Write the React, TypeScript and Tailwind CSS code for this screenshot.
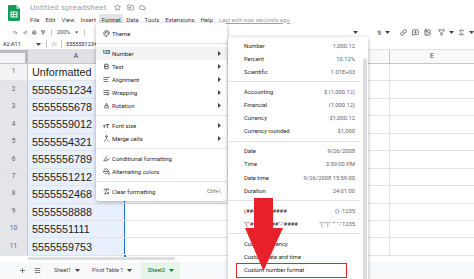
import React from 'react';
import {
  Undo2, Redo2, Printer, PaintRoller, Palette, Bold, AlignLeft, WrapText,
  Baseline, Merge, PaintBucket, RemoveFormatting, Star, FolderInput, Cloud,
  Link, MessageSquarePlus, Image, Filter, Sigma, Plus, Menu, Highlighter
} from 'lucide-react';

const rows = [
  'Unformatted',
  '5555551234', '5555555678', '5555559012', '5555554321', '5555556789',
  '5555551212', '5555552468', '5555558888', '5555551111', '5555559753',
];

function Caret({ className = '' }: { className?: string }) {
  return (
    <svg width="5" height="3" viewBox="0 0 5 3" className={className}>
      <path d="M0 0 L5 0 L2.5 3 Z" fill="currentColor" />
    </svg>
  );
}

function SubArrow() {
  return (
    <svg width="3" height="5" viewBox="0 0 3 5">
      <path d="M0 0 L3 2.5 L0 5 Z" fill="#444746" />
    </svg>
  );
}

function SheetsLogo() {
  return (
    <svg width="12" height="16" viewBox="0 0 12 16">
      <path d="M1.2 0 H8 L12 4 V14.8 A1.2 1.2 0 0 1 10.8 16 H1.2 A1.2 1.2 0 0 1 0 14.8 V1.2 A1.2 1.2 0 0 1 1.2 0 Z" fill="#0f9d58" />
      <path d="M8 0 L12 4 H9 A1 1 0 0 1 8 3 Z" fill="#87ceac" />
      <rect x="3" y="7" width="6" height="5" fill="none" stroke="#fff" strokeWidth="1" />
      <line x1="3" y1="9.5" x2="9" y2="9.5" stroke="#fff" strokeWidth="1" />
      <line x1="5.5" y1="7" x2="5.5" y2="12" stroke="#fff" strokeWidth="1" />
    </svg>
  );
}

type FItem = { icon: React.ReactNode; label: string; arrow?: boolean; right?: string; active?: boolean } | 'sep';

const ic = 'w-[7px] h-[7px] text-[#444746]';
const formatItems: FItem[] = [
  { icon: <Palette className={ic} strokeWidth={2.2} />, label: 'Theme' },
  'sep',
  { icon: <span className="text-[5px] font-bold tracking-[-0.3px] text-[#444746]">123</span>, label: 'Number', arrow: true, active: true },
  { icon: <Bold className={ic} strokeWidth={3} />, label: 'Text', arrow: true },
  { icon: <AlignLeft className={ic} strokeWidth={2.5} />, label: 'Alignment', arrow: true },
  { icon: <WrapText className={ic} strokeWidth={2.5} />, label: 'Wrapping', arrow: true },
  { icon: <Baseline className={ic} strokeWidth={2.5} />, label: 'Rotation', arrow: true },
  'sep',
  { icon: <span className="text-[6px] font-bold text-[#444746]">ᴛT</span>, label: 'Font size', arrow: true },
  { icon: <Merge className={ic} strokeWidth={2.5} />, label: 'Merge cells', arrow: true },
  'sep',
  { icon: <Highlighter className={ic} strokeWidth={2.5} />, label: 'Conditional formatting' },
  { icon: <PaintBucket className={ic} strokeWidth={2.5} />, label: 'Alternating colors' },
  'sep',
  { icon: <RemoveFormatting className={ic} strokeWidth={2.5} />, label: 'Clear formatting', right: 'Ctrl+\\' },
];

type NItem = { label: string; value?: string } | 'sep';
const numberItems: NItem[] = [
  { label: 'Number', value: '1,000.12' },
  { label: 'Percent', value: '10.12%' },
  { label: 'Scientific', value: '1.01E+03' },
  'sep',
  { label: 'Accounting', value: '$ (1,000.12)' },
  { label: 'Financial', value: '(1,000.12)' },
  { label: 'Currency', value: '$1,000.12' },
  { label: 'Currency rounded', value: '$1,000' },
  'sep',
  { label: 'Date', value: '9/26/2008' },
  { label: 'Time', value: '3:59:00 PM' },
  { label: 'Date time', value: '9/26/2008 15:59:00' },
  { label: 'Duration', value: '24:01:00' },
  'sep',
  { label: '(###) ###-####', value: '() -1235' },
  { label: '"("###")" ###"-"####', value: '"("")" "" "-"1235' },
  'sep',
  { label: 'Custom currency' },
  { label: 'Custom date and time' },
  { label: 'Custom number format' },
];

export default function App() {
  return (
    <div className="relative w-[474px] h-[279px] overflow-hidden bg-white font-['Roboto',sans-serif] text-[#1f1f1f]">
      {/* Header */}
      <div className="flex h-[26px]">
        <div className="ml-[8px] mt-[5px]"><SheetsLogo /></div>
        <div className="ml-[10px] flex flex-col">
          <div className="flex items-center h-[13px] mt-[1px]">
            <span className="text-[8px] text-[#9aa0a6] leading-none tracking-[0.15px]">Untitled spreadsheet</span>
            <Star className="ml-[8px] w-[7px] h-[7px] text-[#5f6368]" strokeWidth={2} />
            <FolderInput className="ml-[6px] w-[7px] h-[7px] text-[#5f6368]" strokeWidth={2} />
            <Cloud className="ml-[5px] w-[7px] h-[7px] text-[#5f6368]" strokeWidth={2} />
          </div>
          <div className="flex items-center h-[11px] text-[6px] text-[#3c4043] leading-none">
            <span className="mr-[6px]">File</span>
            <span className="mr-[6px]">Edit</span>
            <span className="mr-[6px]">View</span>
            <span className="mr-[3px]">Insert</span>
            <span className="px-[2.5px] h-[11px] flex items-center bg-[#e1e3e6] rounded-[2px] mr-[3px]">Format</span>
            <span className="mr-[6px]">Data</span>
            <span className="mr-[6px]">Tools</span>
            <span className="mr-[6px]">Extensions</span>
            <span className="mr-[6px]">Help</span>
            <span className="text-[#9aa0a6] underline">Last edit was seconds ago</span>
          </div>
        </div>
      </div>

      {/* Toolbar */}
      <div className="flex items-center h-[13px] text-[#444746]">
        <Undo2 className="ml-[13px] w-[7px] h-[7px]" strokeWidth={2.4} />
        <Redo2 className="ml-[5px] w-[7px] h-[7px]" strokeWidth={2.4} />
        <Printer className="ml-[5px] w-[7px] h-[7px]" strokeWidth={2.6} />
        <PaintRoller className="ml-[4px] w-[7px] h-[7px]" strokeWidth={2.6} />
        <div className="ml-[6px] w-px h-[7px] bg-[#c7c7c7]" />
        <span className="ml-[5px] text-[5.5px]">200%</span>
        <Caret className="ml-[5px]" />
        <div className="ml-[6px] w-px h-[7px] bg-[#c7c7c7]" />
        <div className="ml-[268px] flex items-center gap-[4px]">
          <Caret />
          <span className="text-[6px] ml-[15px]">⅋</span>
          <Caret />
          <Link className="ml-[6px] w-[7px] h-[7px]" strokeWidth={2.4} />
          <MessageSquarePlus className="ml-[1px] w-[7px] h-[7px]" strokeWidth={2.4} />
          <Image className="ml-[1px] w-[7px] h-[7px]" strokeWidth={2.4} />
          <Filter className="ml-[3px] w-[7px] h-[7px]" strokeWidth={2.4} />
          <Caret />
          <Sigma className="w-[7px] h-[7px]" strokeWidth={2.4} />
          <Caret />
        </div>
      </div>

      {/* Formula bar */}
      <div className="flex items-center h-[11px] border-b border-[#e3e3e3] text-[5.5px] text-[#1f1f1f]">
        <span className="ml-[3px] w-[33px]">A2:A11</span>
        <Caret className="text-[#444746]" />
        <div className="ml-[5px] w-px h-[8px] bg-[#c7c7c7]" />
        <span className="ml-[5px] italic text-[#a8a8a8] font-['Liberation_Serif',serif] text-[7px]">fx</span>
        <div className="ml-[4px] w-px h-[8px] bg-[#c7c7c7]" />
        <span className="ml-[4px]">5555551234</span>
      </div>

      {/* Grid */}
      <div className="flex flex-col">
        <div className="flex h-[14px] bg-[#f8f9fa] border-b border-[#c4c7c5] text-[7px] text-[#444746]">
          <div className="w-[28px] bg-[#f1f3f4] border-t-[3px] border-r-[3px] border-[#b8bcc1]" />
          <div className="w-[97px] flex items-center justify-center bg-[#dfe1e5] border-r border-[#c4c7c5] text-[#3c4043]">A</div>
          <div className="w-[115px] border-r border-[#c4c7c5]" />
          <div className="w-[80px] border-r border-[#c4c7c5]" />
          <div className="w-[70px] border-r border-[#c4c7c5]" />
          <div className="flex-1 flex items-center justify-center">E</div>
        </div>
        {rows.map((r, i) => {
          const sel = i > 0;
          return (
            <div key={i} className="flex h-[17.45px] border-b border-[#e2e3e3]">
              <div className={`w-[28px] flex items-center justify-center text-[6.5px] border-r border-[#c4c7c5] ${sel ? 'bg-[#e3e5e8] text-[#5f6368]' : 'bg-[#f1f3f4] text-[#5f6368]'}`}>{i + 1}</div>
              <div className={`w-[97px] flex items-center pl-[4px] overflow-hidden whitespace-nowrap font-['Liberation_Sans',Arial,sans-serif] text-[10.8px] text-[#222] border-r ${sel ? 'bg-[#e8f0fe] border-[#1a73e8]' : 'border-[#e2e3e3]'}`}>{r}</div>
              <div className="w-[115px] border-r border-[#e2e3e3]" />
              <div className="w-[80px] border-r border-[#e2e3e3]" />
              <div className="w-[70px] border-r border-[#e2e3e3]" />
              <div className="flex-1" />
            </div>
          );
        })}
        {/* scrollbar strip */}
        <div className="h-[6px] flex items-center">
          <div className="ml-[28px] w-[147px] h-[3px] rounded-full bg-[#dadce0]" />
        </div>
      </div>

      {/* Bottom tabs */}
      <div className="absolute left-0 right-0 bottom-0 h-[17px] bg-[#f8f9fa] flex items-center text-[5.5px] text-[#444746]">
        <Plus className="ml-[19px] w-[7px] h-[7px]" strokeWidth={2.4} />
        <Menu className="ml-[8px] w-[7px] h-[7px]" strokeWidth={2.4} />
        <span className="ml-[13px]">Sheet1</span>
        <Caret className="ml-[4px]" />
        <span className="ml-[12px]">Pivot Table 1</span>
        <Caret className="ml-[4px]" />
        <div className="ml-[9px] h-[17px] w-[39px] bg-[#e6f4ea] flex items-center justify-center text-[#188038] font-medium">
          Sheet2<Caret className="ml-[4px]" />
        </div>
      </div>

      {/* fill handle */}
      <div className="absolute left-[122.5px] top-[254px] w-[4px] h-[4px] bg-[#1a73e8] border border-white rounded-[1px]" />

      {/* Format menu */}
      <div className="absolute left-[96px] top-[23px] w-[131px] bg-white rounded-[3px] shadow-[0_1px_4px_rgba(0,0,0,0.3)] pt-[3.5px] pb-[3.5px] text-[6px] text-[#1f1f1f]">
        {formatItems.map((it, i) =>
          it === 'sep' ? (
            <div key={i} className="h-[7px] flex items-center"><div className="w-full h-px bg-[#e3e3e3]" /></div>
          ) : (
            <div key={i} className={`h-[13px] flex items-center pl-[4px] pr-[6px] ${it.active ? 'bg-[#f1f3f4]' : ''}`}>
              <div className="w-[12px] flex items-center justify-center">{it.icon}</div>
              <span className="flex-1">{it.label}</span>
              {it.arrow && <SubArrow />}
              {it.right && <span className="text-[#5f6368] text-[5.5px]">{it.right}</span>}
            </div>
          )
        )}
      </div>

      {/* Number submenu */}
      <div className="absolute left-[228px] top-[37px] w-[140px] h-[260px] bg-white rounded-[3px] shadow-[0_1px_4px_rgba(0,0,0,0.3)] pt-[2px] text-[5.8px] leading-[8px] text-[#1f1f1f]">
        {numberItems.map((it, i) =>
          it === 'sep' ? (
            <div key={i} className="h-[6.7px] flex items-center pr-[8px]"><div className="w-full h-px bg-[#e3e3e3]" /></div>
          ) : (
            <div key={i} className="h-[13.2px] flex items-center pl-[16px] pr-[13px]">
              <span className="flex-1 whitespace-nowrap">{it.label}</span>
              {it.value && <span className="text-[#5f6368] whitespace-nowrap">{it.value}</span>}
            </div>
          )
        )}
        <div className="absolute right-[1px] top-[21px] w-[4px] h-[250px] rounded-full bg-[#dadce0]" />
      </div>

      {/* Red annotation box */}
      <div className="absolute left-[236px] top-[263px] w-[111px] h-[15px] border-[1.5px] border-[#e3262f]" />

      {/* Red arrow */}
      <svg className="absolute left-0 top-0" width="474" height="279" viewBox="0 0 474 279">
        <rect x="254" y="198" width="19" height="31" fill="#e8202a" />
        <polygon points="245,228 283,228 263.5,271" fill="#e8202a" />
      </svg>
    </div>
  );
}
